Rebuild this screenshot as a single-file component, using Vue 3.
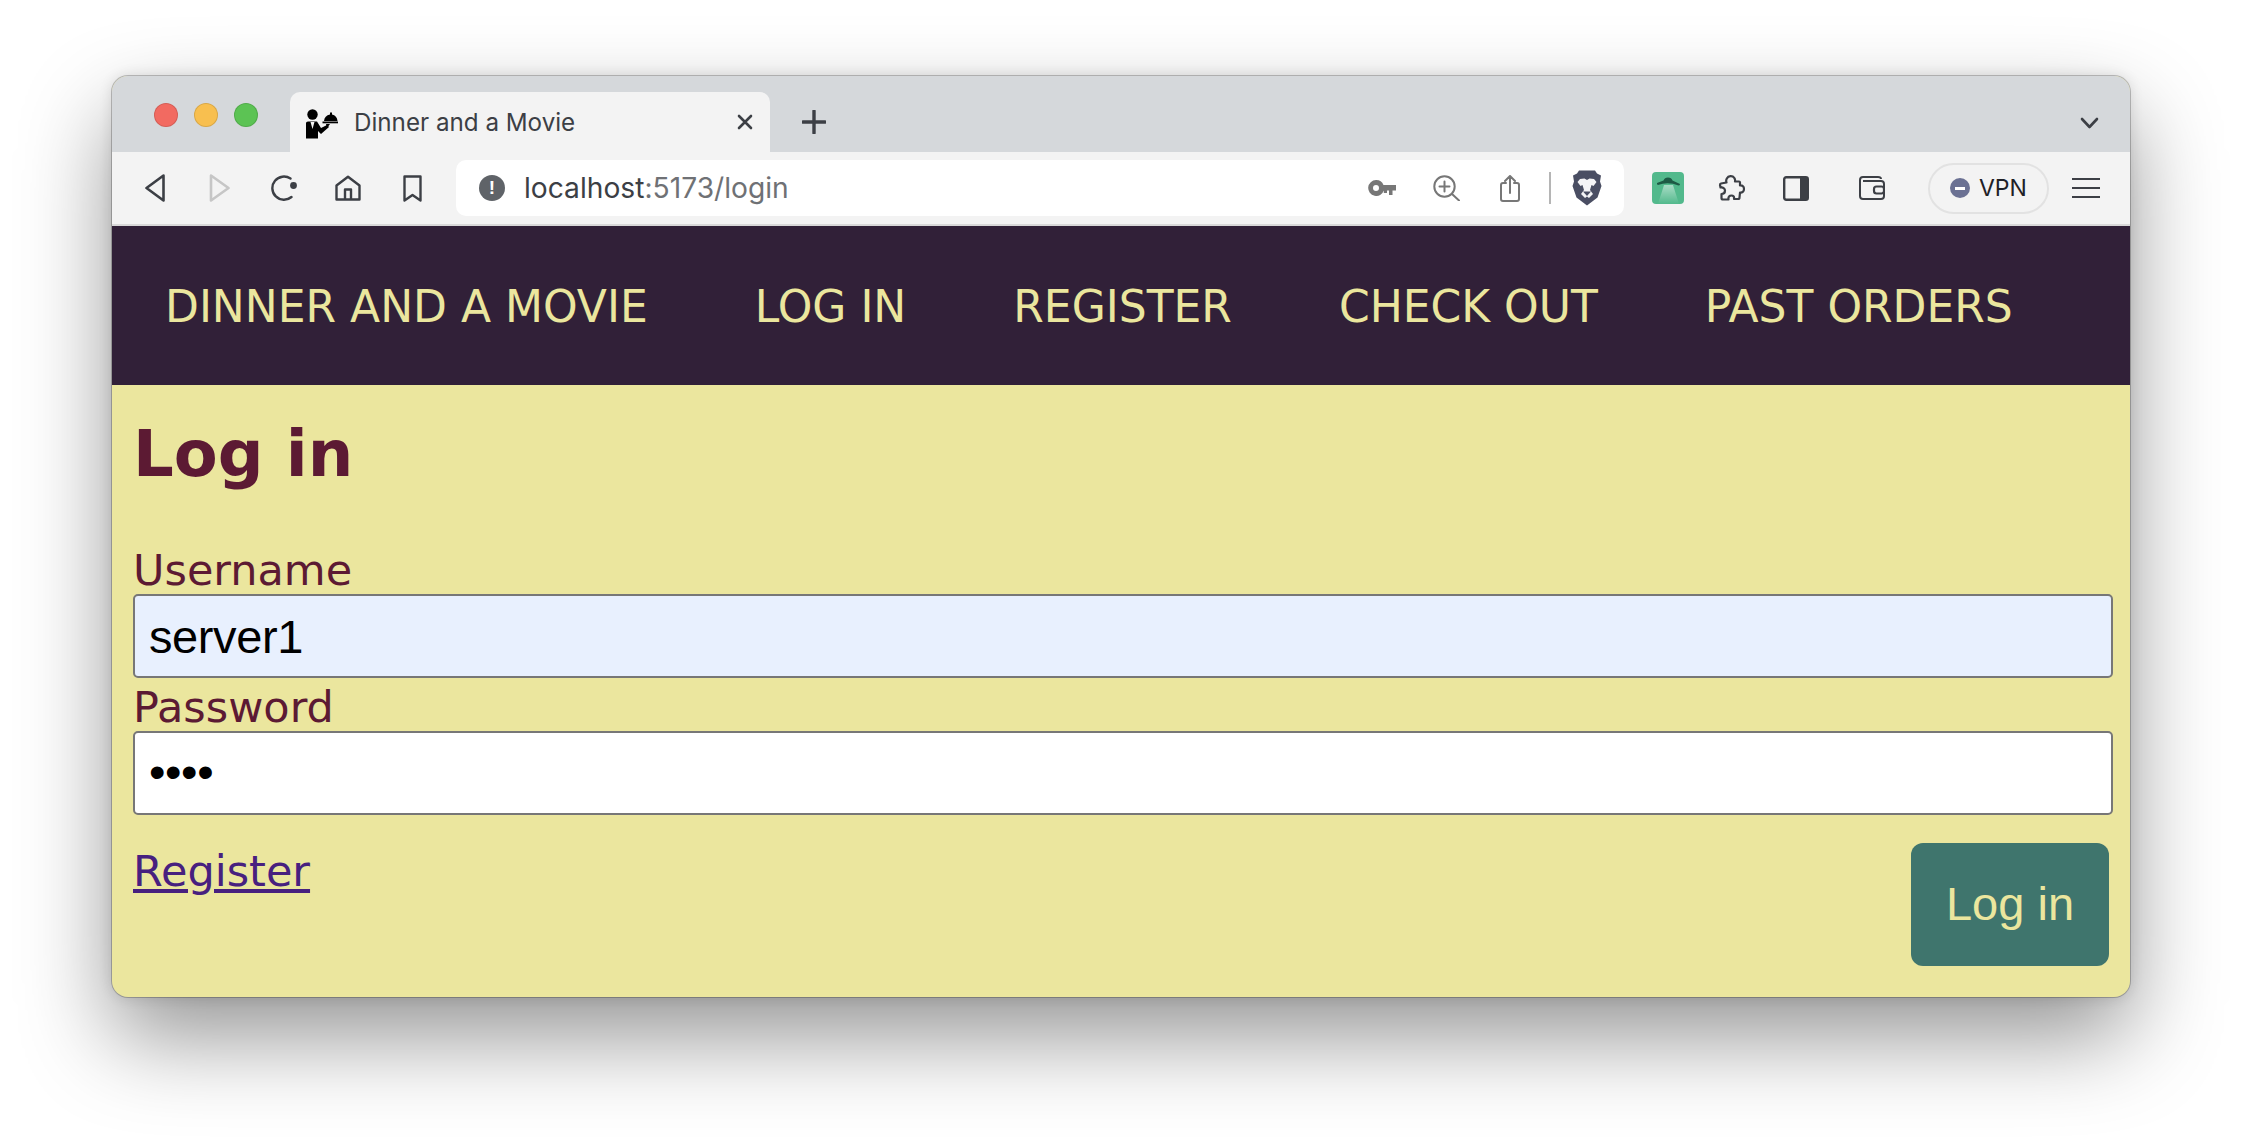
<script setup>
const links = ['DINNER AND A MOVIE', 'LOG IN', 'REGISTER', 'CHECK OUT', 'PAST ORDERS']
</script>

<template>
  <div class="page">
    <div class="window">
      <div class="tabstrip">
        <div class="lights">
          <span class="light red"></span>
          <span class="light yellow"></span>
          <span class="light green"></span>
        </div>
        <div class="tab">
          <svg class="favicon" width="32" height="30" viewBox="0 0 32 30">
            <circle cx="6.5" cy="5.5" r="5.2" fill="#000" />
            <path d="M0 14 Q0 12.5 2 12.5 H11 L15 19 L21 16 L23 18 L15 25 L12 22 V29.5 H0 Z" fill="#000" />
            <path d="M4.5 13 L6.5 20 L8.5 13 Z" fill="#f3f3f3" />
            <path d="M18 12 Q18.5 6.5 24 5.5 V3.5 H26 V5.5 Q31 6.5 31.5 12 Z" fill="#000" />
            <rect x="16.5" y="12.5" width="15.5" height="1.8" fill="#000" />
            <path d="M20 15 L24 15 L21 19 Z" fill="#000" />
          </svg>
          <span class="tab-title">Dinner and a Movie</span>
          <svg class="tab-close" width="16" height="16" viewBox="0 0 16 16">
            <path d="M2 2 L14 14 M14 2 L2 14" stroke="#3c3f45" stroke-width="2.6" stroke-linecap="round" />
          </svg>
        </div>
        <svg class="tab-plus" width="24" height="24" viewBox="0 0 24 24">
          <path d="M12 1 V23 M1 12 H23" stroke="#3c3f45" stroke-width="3.4" stroke-linecap="round" />
        </svg>
        <svg class="tab-more" width="19" height="12" viewBox="0 0 19 12">
          <path d="M2 2 L9.5 10 L17 2" fill="none" stroke="#3c3f45" stroke-width="2.6" stroke-linecap="round" stroke-linejoin="round" />
        </svg>
      </div>

      <div class="toolbar">
        <svg class="ic-back" width="20" height="28" viewBox="0 0 20 28">
          <path d="M18.5 1.5 L1.5 14 L18.5 26.5 Z" fill="none" stroke="#3c3f45" stroke-width="2.6" stroke-linejoin="round" />
        </svg>
        <svg class="ic-forward" width="21" height="28" viewBox="0 0 21 28">
          <path d="M2 1.5 L19.5 14 L2 26.5 Z" fill="none" stroke="#c6c6c6" stroke-width="2.6" stroke-linejoin="round" />
        </svg>
        <svg class="ic-reload" width="26" height="26" viewBox="0 0 26 26">
          <path d="M19.5 3.6 A11.6 11.6 0 1 0 20.5 22" fill="none" stroke="#3c3f45" stroke-width="2.4" stroke-linecap="round" />
          <circle cx="22.5" cy="10.5" r="3.4" fill="#3c3f45" />
        </svg>
        <svg class="ic-home" width="26" height="26" viewBox="0 0 26 26">
          <path d="M1.5 10.5 L13 1.8 L24.5 10.5 V24.5 H1.5 Z M10 24.5 V14.5 H16 V24.5" fill="none" stroke="#3c3f45" stroke-width="2.4" stroke-linejoin="round" />
        </svg>
        <svg class="ic-bookmark" width="19" height="27" viewBox="0 0 19 27">
          <path d="M1.5 1.5 H17.5 V25.5 L9.5 20 L1.5 25.5 Z" fill="none" stroke="#3c3f45" stroke-width="2.4" stroke-linejoin="round" />
        </svg>

        <div class="address">
          <span class="info">!</span>
          <span class="url">localhost<span class="url-dim">:5173/login</span></span>
          <div class="address-tools">
            <svg class="ic-key" width="28" height="16" viewBox="0 0 28 16">
              <path d="M8 0 A8 8 0 0 1 15.5 5 H28 V10.5 H24.5 V15 H21 V10.5 H19 V13 H15.8 V10.5 A8 8 0 1 1 8 0 Z M8 5 A3 3 0 1 0 8 11 A3 3 0 1 0 8 5 Z" fill="#777" fill-rule="evenodd" />
            </svg>
            <svg class="ic-zoom" width="27" height="26" viewBox="0 0 27 26">
              <circle cx="11.5" cy="11.5" r="10.2" fill="none" stroke="#777" stroke-width="2" />
              <path d="M11.5 6.5 V16.5 M6.5 11.5 H16.5 M19 19 L26 25.5" stroke="#777" stroke-width="2" stroke-linecap="round" />
            </svg>
            <svg class="ic-share" width="20" height="27" viewBox="0 0 20 27">
              <path d="M6 8 H3 Q1 8 1 10 V24 Q1 26 3 26 H17 Q19 26 19 24 V10 Q19 8 17 8 H14 M10 18 V1.5 M5 6 L10 1 L15 6" fill="none" stroke="#777" stroke-width="2" stroke-linecap="round" stroke-linejoin="round" />
            </svg>
            <span class="sep"></span>
            <svg class="ic-lion" width="30" height="36" viewBox="0 0 30 36">
              <path d="M7 0.5 H23 L25 3.5 L29 5.5 L28 11.5 L29.5 16 L25.5 27.5 L15 35.5 L4.5 27.5 L0.5 16 L2 11.5 L1 5.5 L5 3.5 Z" fill="#4a4e63" />
              <path d="M8 9 L12.5 8.5 L15 10 L17.5 8.5 L22 9 L24.5 12 L21.5 16 L19.5 15 L18 20 L21 24 L17 28 L15 26.5 L13 28 L9 24 L12 20 L10.5 15 L8.5 16 L5.5 12 Z" fill="#f4f4f6" />
              <path d="M11 21.5 H19 L15 26 Z" fill="#4a4e63" />
            </svg>
          </div>
        </div>

        <svg class="ic-ext" width="32" height="32" viewBox="0 0 32 32">
          <defs>
            <linearGradient id="beam" x1="0" y1="0" x2="0" y2="1">
              <stop offset="0" stop-color="#ffffff" stop-opacity="0.5" />
              <stop offset="1" stop-color="#ffffff" stop-opacity="0" />
            </linearGradient>
          </defs>
          <rect width="32" height="32" rx="4" fill="#52b98c" />
          <path d="M12 13 L21 13 L27 32 L6 32 Z" fill="url(#beam)" />
          <path d="M11.5 8.5 Q12.5 5.5 16 5.5 Q19.5 5.5 20.5 8.5 L28 12 Q28 13.5 26.5 13.5 Q16 9.5 6 13 Q4.5 12.5 5 11 Z" fill="#1d5a45" />
        </svg>
        <svg class="ic-puzzle" width="27" height="26" viewBox="0 0 27 26">
          <path d="M3 8.5 L8.5 7.5 C7.5 5 9 1.5 12.5 1.2 C16 1 17.5 4 17 6.5 L21 6.5 Q22 6.5 22 7.5 L22 10.5 C24.5 10 26 12 26 14 C26 16.5 24 18 22 17.5 L21.5 22.5 Q21.5 24 20 24 L16 24 C16.5 21.5 15 20.5 13.5 20.5 C11.5 20.5 10 22 10.5 24.5 L5 24.5 Q3.5 24.5 3.5 23 L3.5 19 C5.5 19 7 17.5 7 15.5 C7 13.5 5 12 2.5 12.5 L2 10 Q2 8.7 3 8.5 Z" fill="none" stroke="#3c3f45" stroke-width="2.2" stroke-linejoin="round" />
        </svg>
        <svg class="ic-sidebar" width="26" height="25" viewBox="0 0 26 25">
          <rect x="1.2" y="1.2" width="23.6" height="22.6" rx="2" fill="none" stroke="#3c3f45" stroke-width="2.4" />
          <rect x="17" y="1.2" width="7.8" height="22.6" fill="#3c3f45" />
        </svg>
        <svg class="ic-wallet" width="26" height="24" viewBox="0 0 26 24">
          <path d="M4 5 H22 Q25 5 25 8 V20 Q25 23 22 23 H4 Q1 23 1 20 V4 Q1 1 4 1 H19 Q22 1 22 3" fill="none" stroke="#3c3f45" stroke-width="2" stroke-linejoin="round" />
          <rect x="15" y="10.5" width="10" height="7" rx="2.5" fill="#f3f3f3" stroke="#3c3f45" stroke-width="2.2" />
        </svg>
        <div class="vpn">
          <span class="vpn-dot"><span class="vpn-bar"></span></span>
          <span class="vpn-label">VPN</span>
        </div>
        <div class="burger">
          <span></span><span></span><span></span>
        </div>
      </div>

      <nav class="site-nav">
        <a v-for="link in links" :key="link" class="nav-link">{{ link }}</a>
      </nav>

      <main class="content">
        <h1>Log in</h1>
        <label for="username">Username</label>
        <input id="username" class="field autofilled" type="text" value="server1" />
        <label for="password">Password</label>
        <input id="password" class="field secret" type="password" value="1234" />
        <div class="actions">
          <a class="register" href="#">Register</a>
          <button class="submit" type="button">Log in</button>
        </div>
      </main>
    </div>
  </div>
</template>

<style>
html, body {
  margin: 0;
  background: #fff;
}
</style>

<style scoped>
.page {
  width: 2242px;
  height: 1146px;
  box-sizing: border-box;
  padding: 76px 0 0 112px;
  background: #fff;
  overflow: hidden;
}

.window {
  width: 2018px;
  height: 921px;
  display: flex;
  flex-direction: column;
  border-radius: 16px;
  overflow: hidden;
  background: #ebe69e;
  box-shadow: 0 0 0 1px rgba(0, 0, 0, 0.22), 0 0 14px rgba(0, 0, 0, 0.12), 0 40px 90px rgba(0, 0, 0, 0.42);
}

/* browser chrome */
.tabstrip {
  height: 76px;
  flex: none;
  display: flex;
  align-items: flex-start;
  background: #d5d8db;
}

.lights {
  display: flex;
  gap: 16px;
  margin: 27px 0 0 42px;
}

.light {
  width: 24px;
  height: 24px;
  box-sizing: border-box;
  border-radius: 50%;
  border: 1px solid rgba(0, 0, 0, 0.12);
}

.red { background: #f26a61; }
.yellow { background: #f8bf4f; }
.green { background: #5cc354; }

.tab {
  width: 480px;
  height: 60px;
  margin: 16px 0 0 32px;
  box-sizing: border-box;
  padding: 0 17px 0 16px;
  display: flex;
  align-items: center;
  background: #f3f3f3;
  border-radius: 10px 10px 0 0;
}

.favicon { margin-top: 3px; }

.tab-title {
  margin-left: 16px;
  font-family: Inter, "Liberation Sans", sans-serif;
  font-size: 24.2px;
  color: #3c3f45;
  white-space: nowrap;
}

.tab-close { margin-left: auto; }
.tab-plus { margin: 34px 0 0 32px; }
.tab-more { margin: 41px 31px 0 auto; }

.toolbar {
  height: 72px;
  flex: none;
  display: flex;
  align-items: center;
  padding-left: 33px;
  background: #f3f3f3;
  border-bottom: 2px solid #d9d9d9;
}

.ic-forward { margin-left: 44px; }
.ic-reload { margin-left: 41px; }
.ic-home { margin-left: 38px; }
.ic-bookmark { margin-left: 42px; }

.address {
  width: 1168px;
  height: 56px;
  margin-left: 34px;
  box-sizing: border-box;
  padding: 0 22px 0 23px;
  display: flex;
  align-items: center;
  background: #fff;
  border-radius: 10px;
}

.info {
  width: 26px;
  height: 26px;
  border-radius: 50%;
  background: #5f6368;
  color: #fff;
  font-family: "Liberation Sans", sans-serif;
  font-weight: 700;
  font-size: 19px;
  line-height: 26px;
  text-align: center;
}

.url {
  margin-left: 19px;
  font-family: Inter, "Liberation Sans", sans-serif;
  font-size: 28.2px;
  color: #3c3f45;
  white-space: nowrap;
}

.url-dim { color: #6f7175; }

.address-tools {
  margin-left: auto;
  display: flex;
  align-items: center;
}

.ic-zoom { margin-left: 37px; }
.ic-share { margin-left: 40px; }

.sep {
  width: 2px;
  height: 32px;
  margin-left: 29px;
  background: #b5b5b5;
}

.ic-lion { margin-left: 21px; }
.ic-ext { margin-left: 28px; }
.ic-puzzle { margin-left: 34px; }
.ic-sidebar { margin-left: 38px; }
.ic-wallet { margin-left: 50px; }

.vpn {
  width: 121px;
  height: 51px;
  margin-left: 43px;
  box-sizing: border-box;
  padding-left: 20px;
  display: flex;
  align-items: center;
  gap: 9px;
  border: 2px solid #e2e2e2;
  border-radius: 26px;
}

.vpn-dot {
  width: 20px;
  height: 20px;
  flex: none;
  display: flex;
  align-items: center;
  justify-content: center;
  border-radius: 50%;
  background: #6b7193;
}

.vpn-bar {
  width: 10px;
  height: 3px;
  background: #fff;
}

.vpn-label {
  font-family: Inter, "Liberation Sans", sans-serif;
  font-size: 23px;
  color: #1f2126;
}

.burger {
  width: 28px;
  margin-left: 23px;
  display: flex;
  flex-direction: column;
  gap: 6.5px;
}

.burger span {
  height: 2.5px;
  background: #3c3f45;
}

/* the site itself */
.site-nav {
  height: 159px;
  flex: none;
  box-sizing: border-box;
  padding: 2px 0 0 53px;
  display: flex;
  align-items: center;
  gap: 107px;
  background: #312038;
}

.nav-link {
  font-family: "DejaVu Sans", sans-serif;
  font-size: 44px;
  color: #ebe69e;
  white-space: nowrap;
}

.content {
  flex: 1;
  padding: 0 17px 0 21px;
  display: flex;
  flex-direction: column;
  color: #5c1a33;
  font-family: "DejaVu Sans", sans-serif;
}

h1 {
  margin: 24px 0 41px;
  font-size: 64px;
  line-height: 91px;
  font-weight: 700;
}

label {
  padding-top: 5px;
  font-size: 43px;
  line-height: 48px;
}

.field {
  width: 100%;
  height: 84px;
  box-sizing: border-box;
  padding: 0 14px;
  border: 2px solid #777;
  border-radius: 5px;
  background: #fff;
  color: #000;
  font-family: "Liberation Sans", sans-serif;
  font-size: 47px;
  letter-spacing: -0.4px;
  outline: none;
}

.autofilled { background: #e8f0fe; }
.secret { padding-bottom: 3px; }

.actions {
  margin-top: 28px;
  padding-right: 4px;
  display: flex;
  justify-content: space-between;
  align-items: flex-start;
}

.register {
  padding-top: 3px;
  font-size: 43px;
  line-height: 50px;
  color: #47207f;
}

.submit {
  width: 198px;
  height: 123px;
  padding: 0 0 3px;
  border: none;
  border-radius: 12px;
  background: #3f756d;
  color: #ebe69e;
  font-family: "Liberation Sans", sans-serif;
  font-size: 47px;
}
</style>
